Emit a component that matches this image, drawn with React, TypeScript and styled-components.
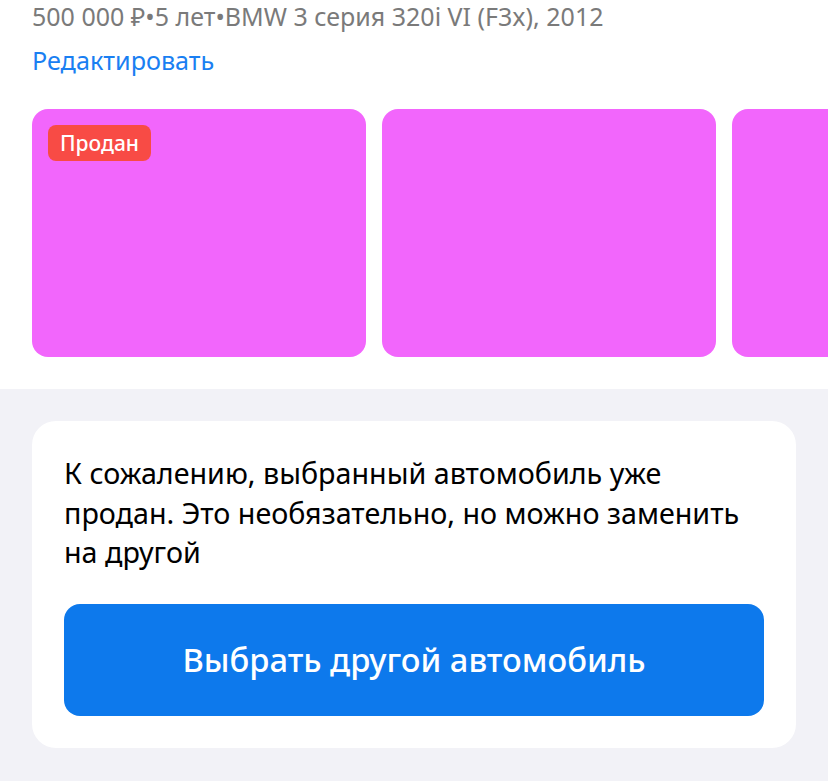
import React from "react";
import styled, { createGlobalStyle } from "styled-components";

const GlobalStyle = createGlobalStyle`
  html, body {
    margin: 0;
    padding: 0;
    background: #f2f2f7;
  }
  body {
    font-family: "Noto Sans", "Open Sans", "Liberation Sans", sans-serif;
    -webkit-font-smoothing: antialiased;
  }
`;

const Page = styled.div`
  width: 828px;
  height: 781px;
  overflow: hidden;
  display: flex;
  flex-direction: column;
  background: #f2f2f7;
`;

const TopSection = styled.section`
  background: #ffffff;
  padding: 0 0 32px;
  display: flex;
  flex-direction: column;
`;

const Summary = styled.div`
  padding: 0 32px;
  font-size: 25px;
  line-height: 32px;
  color: #7a7a7a;
  white-space: nowrap;
`;

const EditLink = styled.a`
  display: block;
  margin: 12px 32px 0;
  font-size: 25.2px;
  line-height: 32px;
  color: #1a7ff2;
  text-decoration: none;
`;

const Gallery = styled.div`
  display: flex;
  gap: 16px;
  padding: 0 32px;
  margin-top: 33px;
  overflow: hidden;
`;

const Photo = styled.div`
  position: relative;
  flex-shrink: 0;
  width: 334px;
  height: 248px;
  border-radius: 16px;
  background: #f266fc;
`;

const SoldBadge = styled.span`
  position: absolute;
  top: 16px;
  left: 16px;
  height: 36px;
  padding: 0 12px;
  display: inline-flex;
  align-items: center;
  border-radius: 8px;
  background: #f84b45;
  color: #ffffff;
  font-size: 21px;
  font-weight: 500;
`;

const GraySection = styled.section`
  flex: 1;
  padding: 32px;
`;

const Card = styled.div`
  background: #ffffff;
  border-radius: 24px;
  padding: 32px;
  display: flex;
  flex-direction: column;
  gap: 32px;
`;

const Message = styled.p`
  margin: 0;
  font-size: 28.7px;
  line-height: 39.5px;
  color: #000000;
`;

const PrimaryButton = styled.button`
  height: 112px;
  border: none;
  border-radius: 16px;
  background: #0d79ec;
  color: #ffffff;
  font-family: inherit;
  font-size: 32.7px;
  font-weight: 500;
  cursor: pointer;
`;

const photos = [true, false, false];

export default function App() {
  return (
    <>
      <GlobalStyle />
      <Page>
        <TopSection>
          <Summary>500 000 ₽•5 лет•BMW 3 серия 320i VI (F3x), 2012</Summary>
          <EditLink href="#">Редактировать</EditLink>
          <Gallery>
            {photos.map((sold, i) => (
              <Photo key={i}>{sold && <SoldBadge>Продан</SoldBadge>}</Photo>
            ))}
          </Gallery>
        </TopSection>
        <GraySection>
          <Card>
            <Message>
              К сожалению, выбранный автомобиль уже продан. Это необязательно, но можно заменить на другой
            </Message>
            <PrimaryButton>Выбрать другой автомобиль</PrimaryButton>
          </Card>
        </GraySection>
      </Page>
    </>
  );
}
